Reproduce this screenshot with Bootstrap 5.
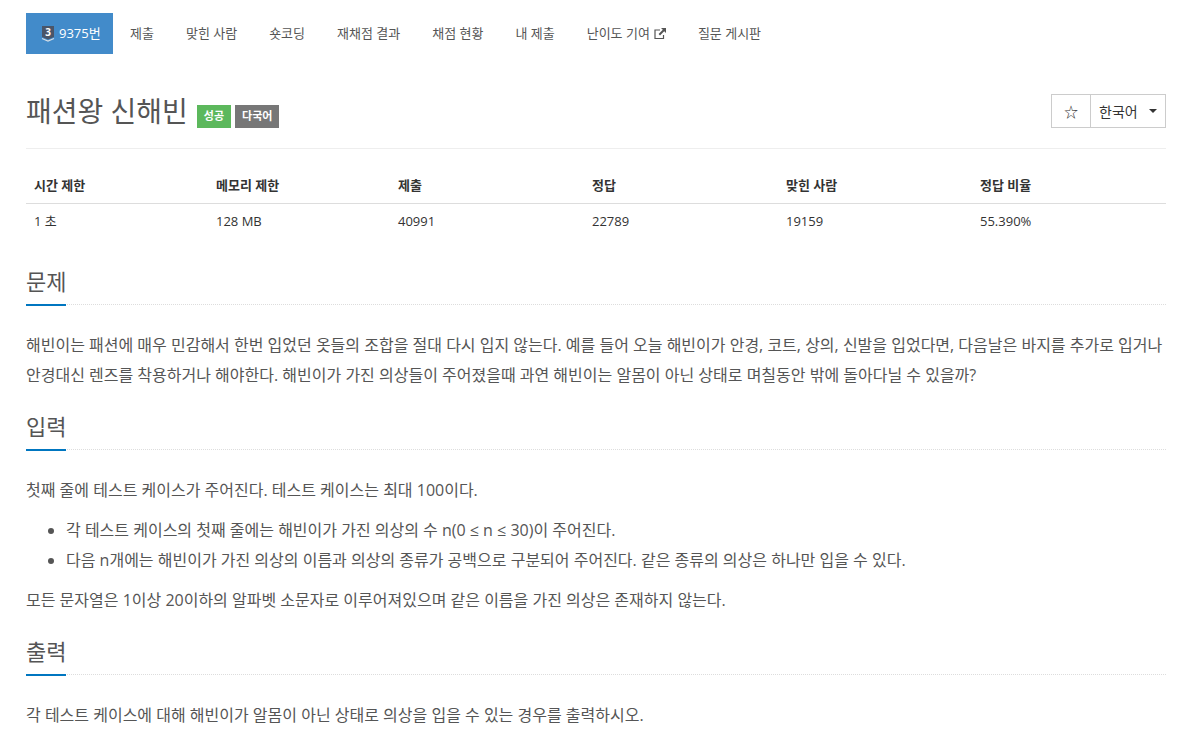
<!DOCTYPE html>
<html lang="ko">
<head>
  <meta charset="UTF-8">
  <title>패션왕 신해빈</title>
  <link href="https://cdn.jsdelivr.net/npm/bootstrap@5.3.2/dist/css/bootstrap.min.css" rel="stylesheet">
  <style>
    body { font-family: "Open Sans", "Noto Sans CJK KR", sans-serif; font-size: 16px; color: #555; overflow: hidden; }
    .page-wrap { width: 1140px; margin-left: 26px; }
    .prob-menu { margin-top: 13px; height: 41px; font-size: 13px; }
    .prob-menu a { display: flex; align-items: center; height: 41px; padding: 0 15px; color: #555; text-decoration: none; margin-right: 2px; }
    .prob-menu a.on { background: #428bca; color: #fff; width: 87px; padding: 0 0 0 15px; }
    .prob-menu svg { flex: none; }
    .title-row { margin-top: 40px; height: 55px; border-bottom: 1px solid #eee; padding-bottom: 20px; }
    .title-row h1 { font-size: 28px; font-weight: 400; color: #555; margin: 0; line-height: 36px; }
    .tag { display: inline-flex; align-items: center; height: 23px; padding: 0 7px; font-size: 11px; font-weight: 600; color: #fff; margin-left: 4px; margin-top: 10px; }
    .tag-ok { background: #5cb85c; margin-left: 9px; }
    .tag-lang { background: #777; }
    .tool-box { border: 1px solid #ccc; height: 34px; width: 115px; color: #333; font-size: 14px; }
    .tool-star { width: 39px; border-right: 1px solid #ccc; flex: none; }
    .tool-lang { flex: 1; padding: 0 8px; }
    .tool-caret { width: 0; height: 0; border-top: 4px solid #333; border-left: 4px solid transparent; border-right: 4px solid transparent; }
    .info-table { width: 100%; margin-top: 20px; font-size: 13px; color: #333; table-layout: fixed; }
    .info-table th { height: 34px; padding: 0 8px; font-weight: 700; border-bottom: 1px solid #ddd; }
    .info-table td { height: 36px; padding: 0 8px; color: #333; }
    .sec-head { position: relative; border-bottom: 1px dotted #ddd; height: 39px; margin-bottom: 25px; }
    .sec-head h2 { font-size: 22px; font-weight: 400; color: #555; margin: 0; line-height: 30px; }
    .sec-head::after { content: ""; position: absolute; left: 0; bottom: -2px; width: 40px; height: 2px; background: #0076c0; }
    .prob-text { line-height: 30px; margin-bottom: 10px; color: #555; }
    .prob-list { line-height: 30px; margin-bottom: 10px; padding-left: 40px; }
    .sec-first { margin-top: 27px; }
    .sec-next { margin-top: 21px; }
  </style>
</head>
<body>
<div class="page-wrap">
  <nav class="prob-menu d-flex">
    <a class="on" href="#">
      <svg width="14" height="16" viewBox="0 0 14 16" class="me-1"><path d="M1 0h12v11l-6 2.500-6-2.500z" fill="#4a5568"/><path d="M1 12.500l6 2.500 6-2.500" fill="none" stroke="#d5dde5" stroke-width="1.200"/><text x="7" y="10" font-size="10" font-weight="700" fill="#fff" text-anchor="middle">3</text></svg>
      9375번</a>
    <a href="#">제출</a>
    <a href="#">맞힌 사람</a>
    <a href="#">숏코딩</a>
    <a href="#">재채점 결과</a>
    <a href="#">채점 현황</a>
    <a href="#">내 제출</a>
    <a href="#">난이도 기여
      <svg width="12" height="12" viewBox="0 0 12 12" class="ms-1"><path d="M9.500 7v3.500h-8.500v-8.500h5" fill="none" stroke="#555" stroke-width="1.200"/><path d="M7 0h5v5l-1.800-1.800-4.200 4.200-1.400-1.400 4.200-4.200z" fill="#555"/></svg></a>
    <a href="#">질문 게시판</a>
  </nav>

  <div class="title-row d-flex justify-content-between">
    <div class="d-flex align-items-center">
      <h1>패션왕 신해빈</h1>
      <span class="tag tag-ok">성공</span>
      <span class="tag tag-lang">다국어</span>
    </div>
    <div class="tool-box d-flex align-items-center">
      <div class="tool-star d-flex align-items-center justify-content-center h-100">☆</div>
      <div class="tool-lang d-flex align-items-center justify-content-between h-100"><span>한국어</span><span class="tool-caret"></span></div>
    </div>
  </div>

  <table class="info-table">
    <colgroup><col style="width:182px"><col style="width:182px"><col style="width:194px"><col style="width:194px"><col style="width:194px"><col style="width:194px"></colgroup>
    <thead><tr><th>시간 제한</th><th>메모리 제한</th><th>제출</th><th>정답</th><th>맞힌 사람</th><th>정답 비율</th></tr></thead>
    <tbody><tr><td>1 초</td><td>128 MB</td><td>40991</td><td>22789</td><td>19159</td><td>55.390%</td></tr></tbody>
  </table>

  <section class="sec-first">
    <div class="sec-head"><h2>문제</h2></div>
    <p class="prob-text">해빈이는 패션에 매우 민감해서 한번 입었던 옷들의 조합을 절대 다시 입지 않는다. 예를 들어 오늘 해빈이가 안경, 코트, 상의, 신발을 입었다면, 다음날은 바지를 추가로 입거나 안경대신 렌즈를 착용하거나 해야한다. 해빈이가 가진 의상들이 주어졌을때 과연 해빈이는 알몸이 아닌 상태로 며칠동안 밖에 돌아다닐 수 있을까?</p>
  </section>
  <section class="sec-next">
    <div class="sec-head"><h2>입력</h2></div>
    <p class="prob-text">첫째 줄에 테스트 케이스가 주어진다. 테스트 케이스는 최대 100이다.</p>
    <ul class="prob-list">
      <li>각 테스트 케이스의 첫째 줄에는 해빈이가 가진 의상의 수 n(0 ≤ n ≤ 30)이 주어진다.</li>
      <li>다음 n개에는 해빈이가 가진 의상의 이름과 의상의 종류가 공백으로 구분되어 주어진다. 같은 종류의 의상은 하나만 입을 수 있다.</li>
    </ul>
    <p class="prob-text">모든 문자열은 1이상 20이하의 알파벳 소문자로 이루어져있으며 같은 이름을 가진 의상은 존재하지 않는다.</p>
  </section>
  <section class="sec-next">
    <div class="sec-head"><h2>출력</h2></div>
    <p class="prob-text">각 테스트 케이스에 대해 해빈이가 알몸이 아닌 상태로 의상을 입을 수 있는 경우를 출력하시오.</p>
  </section>
</div>
<script src="https://cdn.jsdelivr.net/npm/bootstrap@5.3.2/dist/js/bootstrap.bundle.min.js"></script>
</body>
</html>
